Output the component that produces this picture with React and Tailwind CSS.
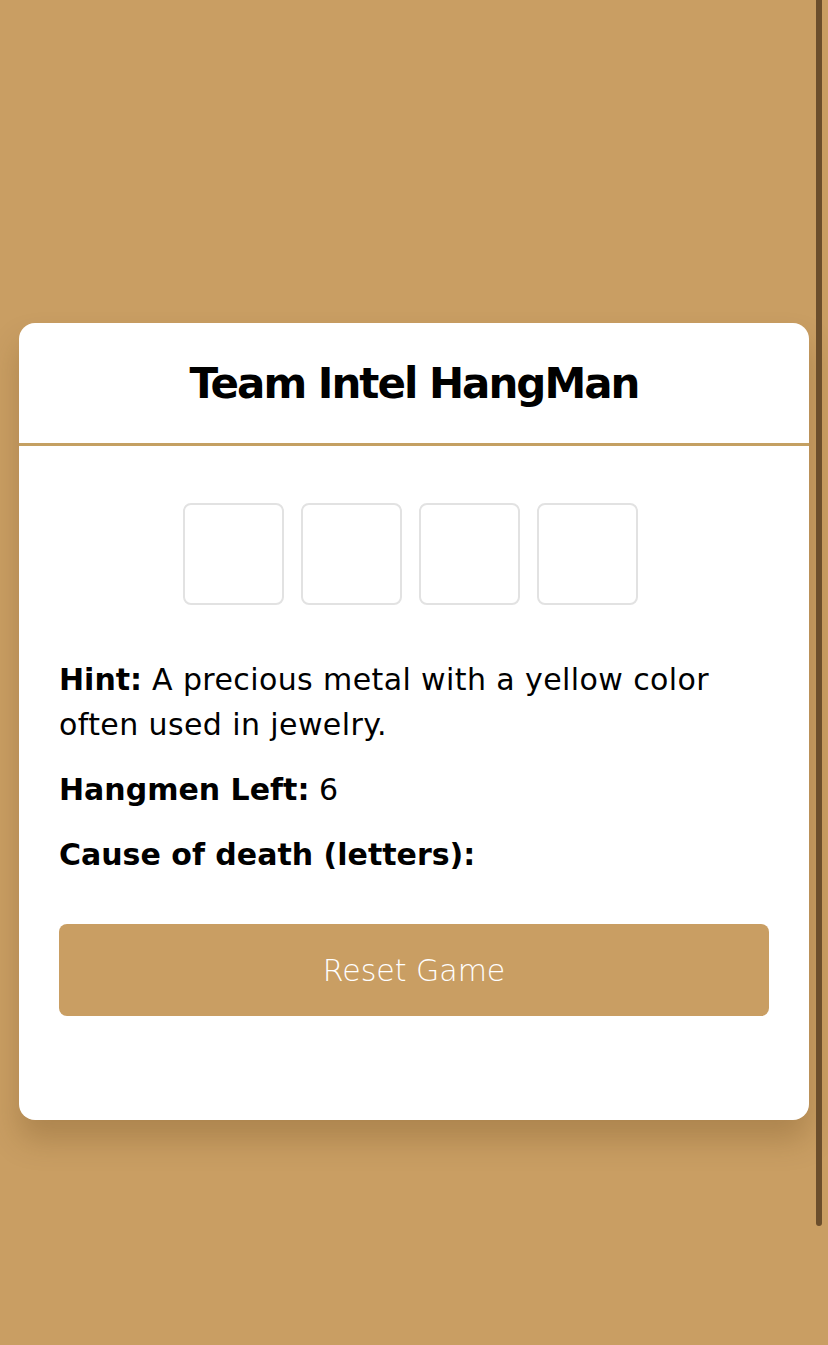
import React from 'react';

const letters = ['', '', '', ''];

const App = () => {
  return (
    <div
      className="relative h-screen overflow-hidden bg-[#c99e63] px-[19px] pt-[323px]"
      style={{ fontFamily: '"DejaVu Sans", sans-serif' }}
    >
      <div className="w-[790px] h-[797px] bg-white rounded-[16px] shadow-[0_20px_30px_rgba(90,60,20,0.25)] overflow-hidden">
        <header className="h-[123px] flex items-center justify-center border-b-[3px] border-[#c4a062]">
          <h1 className="text-[42px] font-bold tracking-[-2px] text-black">Team Intel HangMan</h1>
        </header>

        <div className="px-[40px] pt-[57px]">
          <div className="flex justify-center gap-[17px] pr-[8px]">
            {letters.map((l, i) => (
              <div
                key={i}
                className="w-[101px] h-[102px] rounded-[8px] border-2 border-[#e2e2e2] flex items-center justify-center text-[40px]"
              >
                {l}
              </div>
            ))}
          </div>

          <div className="mt-[52px] text-[30px] leading-[45px] text-black">
            <p className="tracking-[0.4px]">
              <span className="font-bold tracking-normal">Hint:</span> A precious metal with a yellow color often used in jewelry.
            </p>
            <p className="mt-[20px]">
              <span className="font-bold">Hangmen Left:</span> 6
            </p>
            <p className="mt-[20px] font-bold">Cause of death (letters):</p>
          </div>

          <button className="mt-[47px] w-full h-[92px] rounded-[8px] bg-[#c99e63] text-white text-[30px] font-light">
            Reset Game
          </button>
        </div>
      </div>

      <div className="absolute right-[6px] top-0 w-[6px] h-[1226px] rounded-b-full bg-[#6b4e2c]" />
    </div>
  );
};

export default App;
